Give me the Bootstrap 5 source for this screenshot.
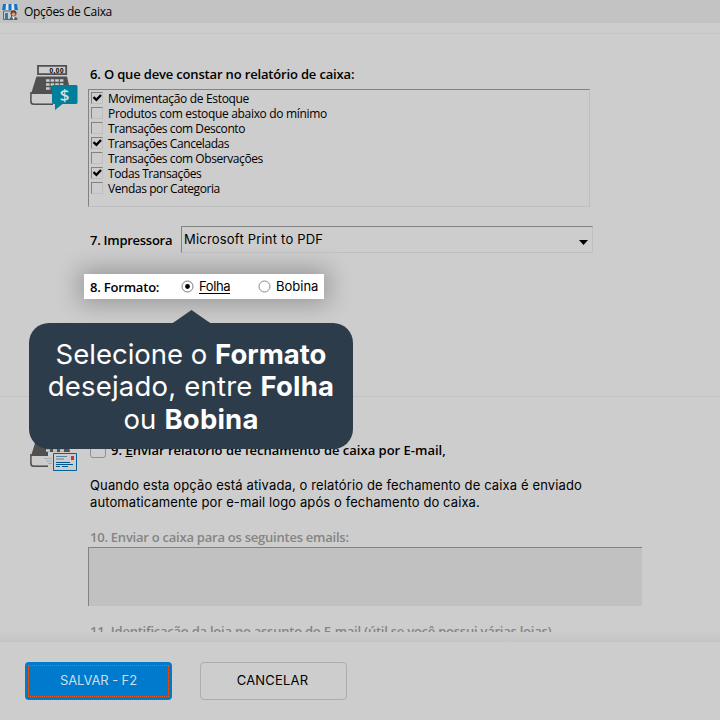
<!DOCTYPE html>
<html lang="pt-BR">
<head>
<meta charset="utf-8">
<meta name="viewport" content="width=device-width, initial-scale=1">
<title>Opções de Caixa</title>
<link href="https://cdn.jsdelivr.net/npm/bootstrap@5.3.0/dist/css/bootstrap.min.css" rel="stylesheet">
<style>
  body { width: 720px; height: 720px; overflow: hidden; background: #cdcdcd; color: #000; font-family: "Open Sans", "Noto Sans", sans-serif; font-size: 13px; }
  .titlebar { height: 23px; background: #c3c3c3; font-size: 12px; line-height: 23px; letter-spacing: -.31px; padding-left: 1px; gap: 5px; }
  .strip { height: 11px; border-bottom: 1px solid #c5c5c5; }
  .sect-a { height: 363px; border-bottom: 1px solid #c3c3c3; }
  .sect-b { height: 235px; overflow: hidden; }
  .icon-col { width: 88px; padding-left: 29px; }
  .sect-a .icon-col { padding-top: 24px; }
  .sect-b .icon-col { padding-top: 23px; }
  .ttl { font-weight: 600; font-size: 13px; line-height: 18px; padding-left: 2px; letter-spacing: -.165px; }
  .sect-a .first-ttl { margin: 31px 0 6px; }
  .sunken { border: 1px solid #bfbfbf; border-top-color: #828282; border-left-color: #828282; }
  .report-list { width: 502px; height: 118px; padding: 1px 0 0 2px; font-size: 12px; letter-spacing: -.325px; }
  .report-list li { height: 15px; line-height: 16px; gap: 5px; }
  .report-list .tight { letter-spacing: -.42px; }
  .tick { width: 12px; height: 12px; margin-top: 1px; }
  .tick svg { display: block; }
  .inter { font-family: Inter, sans-serif; font-size: 13px; }
  .printer-row { margin-top: 19px; height: 27px; }
  .printer-label { width: 93px; letter-spacing: -.27px; padding-top: 1px; }
  .printer { width: 412px; height: 27px; padding: 1px 4px 0 2px; letter-spacing: .2px; }
  .format-row { width: 240px; height: 25px; margin: 21px 0 0 -4px; padding-left: 4px; background: #fff; box-shadow: 0 0 24px 4px rgba(0,0,0,.28); }
  .format-label { width: 93px; letter-spacing: -.2px; padding-top: 1px; }
  .opt { gap: 5px; line-height: 16px; padding-bottom: 1px; }
  .opt-first { width: 77px; }
  .opt-first u { letter-spacing: -.4px; text-underline-offset: 2px; }
  .opt-title { height: 18px; gap: 3px; margin: 44px 0 0 2px; }
  .opt-title .ttl { letter-spacing: 0; }
  .box9 { width: 16px; height: 16px; margin-top: 1px; border: 1px solid #8f8f8f; border-radius: 3px; }
  .note { margin: 18px 0 0 2px; line-height: 17px; letter-spacing: .13px; }
  .note span { letter-spacing: .1px; }
  .dim { color: #848484; letter-spacing: -.24px; }
  .ttl-ten { margin: 17px 0 1px; }
  .emails { width: 554px; height: 59px; margin-bottom: 16px; background: #c1c1c1; border-top: 1px solid #828282; border-left: 1px solid #828282; }
  .shade { height: 10px; background: linear-gradient(#cccccc, #c4c4c4); }
  .foot { height: 78px; padding: 20px 25px; gap: 28px; }
  .foot .btn { width: 147px; height: 38px; border-radius: 4px; padding: 3px; font: 13px/1 Inter, sans-serif; }
  .foot .btn-save { background: #007acd; color: #d0dde6; border: 0; letter-spacing: -.1px; }
  .btn-save span { border: 1px dotted #ee5a14; padding-bottom: 1px; }
  .foot .btn-cancel { border: 1px solid #adadad; color: #000; letter-spacing: .2px; padding: 2px 5px 4px 3px; }
  .callout { left: 29px; top: 323px; width: 324px; height: 126px; border-radius: 20px; background: #2d3c4b; color: #fff; font: 400 27.5px/32.3px Inter, sans-serif; letter-spacing: .2px; padding-top: 15px; }
  .callout b { font-weight: 700; }
  .callout .first-line { letter-spacing: 0; }
  .callout svg { left: 142px; top: -13px; }
</style>
<script src="https://cdn.jsdelivr.net/npm/bootstrap@5.3.0/dist/js/bootstrap.bundle.min.js"></script>
</head>
<body class="position-relative d-flex flex-column">
<header class="titlebar d-flex align-items-center flex-shrink-0">
  <svg width="18" height="18" viewBox="0 0 18 18">
    <path d="M2.500 8h8v8.500h-8z" fill="#c9ced2" stroke="#56697a"/><path d="M4 10h3v6H4z" fill="#2f7fae"/>
    <path d="M2 1h14l1 6H1z" fill="#dfe4e9"/><path d="M2 1h3l-.5 6H1zM7.500 1h3v6h-3zM13 1h3l1 6h-3.500z" fill="#1373c9"/>
    <circle cx="12.500" cy="10.200" r="3" fill="#6b3f28"/><circle cx="12.500" cy="11.200" r="1.800" fill="#dba17c"/><path d="M8.500 17c0-3 2-3.200 4-3.200s4 .2 4 3.200z" fill="#5b6066"/><path d="M11 13.800h3L12.500 17z" fill="#eee"/>
  </svg>
  <span class="text-nowrap">Opções de Caixa</span>
</header>
<div class="strip flex-shrink-0"></div>

<section class="sect-a d-flex flex-shrink-0">
  <div class="icon-col flex-shrink-0">
    <svg class="d-block" width="52" height="56" viewBox="29 58 52 56">
      <path d="M38 65.900h28.200v8.200H38z" fill="#cdcdcd" stroke="#505050" stroke-width="1.800"/>
      <text x="49.500" y="72.500" font-family="Liberation Sans, sans-serif" font-weight="700" font-size="6.500" textLength="14">0,00</text>
      <path d="M36.500 76.500h30.500l4 17.500H31z" fill="#505050"/>
      <path d="M31 92v9.500q0 2.700 2.700 2.700H53" fill="none" stroke="#505050" stroke-width="1.700"/><path d="M31.800 94H60v9.300H34q-2.200 0-2.200-2.200z" fill="#cdcdcd"/>
      <path d="M46 80.500h18M46 84.500h18M46 88.500h5" stroke="#cdcdcd" stroke-width="2.600" stroke-dasharray="3.600 1"/>
      <path d="M53.500 85h22.600q1.400 0 1.400 1.400v16.200q0 1.400-1.400 1.400H62.500L55 110v-6h-1.500q-1.500 0-1.500-1.400V86.400q0-1.400 1.500-1.400z" fill="#007f9b"/>
      <text x="64.500" y="101" text-anchor="middle" font-family="Open Sans, sans-serif" font-weight="600" font-size="17" fill="#d4dfe2">$</text>
    </svg>
  </div>
  <div>
    <div class="ttl first-ttl text-nowrap">6. O que deve constar no relatório de caixa:</div>
    <ul class="report-list sunken list-unstyled mb-0 text-nowrap">
      <li class="d-flex"><i class="tick sunken"><svg width="10" height="10" viewBox="0 0 10 10"><path d="M1.500 4.200l2.900 2.700L9 2" fill="none" stroke="#000" stroke-width="2.300"/></svg></i>Movimentação de Estoque</li>
      <li class="d-flex"><i class="tick sunken"></i>Produtos com estoque abaixo do mínimo</li>
      <li class="d-flex tight"><i class="tick sunken"></i>Transações com Desconto</li>
      <li class="d-flex tight"><i class="tick sunken"><svg width="10" height="10" viewBox="0 0 10 10"><path d="M1.500 4.200l2.900 2.700L9 2" fill="none" stroke="#000" stroke-width="2.300"/></svg></i>Transações Canceladas</li>
      <li class="d-flex tight"><i class="tick sunken"></i>Transações com Observações</li>
      <li class="d-flex tight"><i class="tick sunken"><svg width="10" height="10" viewBox="0 0 10 10"><path d="M1.500 4.200l2.900 2.700L9 2" fill="none" stroke="#000" stroke-width="2.300"/></svg></i>Todas Transações</li>
      <li class="d-flex tight"><i class="tick sunken"></i>Vendas por Categoria</li>
    </ul>
    <div class="printer-row d-flex align-items-center">
      <div class="ttl printer-label text-nowrap">7. Impressora</div>
      <div class="printer sunken inter d-flex align-items-center justify-content-between">
        <span>Microsoft Print to PDF</span>
        <svg width="9" height="5" class="mt-1" viewBox="0 0 9 5"><path d="M0 0h9L4.500 5z"/></svg>
      </div>
    </div>
    <div class="format-row d-flex align-items-center">
      <div class="ttl format-label text-nowrap">8. Formato:</div>
      <div class="opt opt-first inter d-flex align-items-center"><svg width="13" height="13" viewBox="0 0 13 13"><circle cx="6.500" cy="6.500" r="5.500" fill="#fff" stroke="#777" /><circle cx="6.500" cy="6.500" r="2.400"/></svg><u>Folha</u></div>
      <div class="opt inter d-flex align-items-center"><svg width="13" height="13" viewBox="0 0 13 13"><circle cx="6.500" cy="6.500" r="5.500" fill="#fff" stroke="#888"/></svg><span>Bobina</span></div>
    </div>
  </div>
</section>

<section class="sect-b d-flex flex-shrink-0">
  <div class="icon-col flex-shrink-0">
    <svg class="d-block" width="52" height="56" viewBox="29 58 52 56">
      <path d="M38 65.900h28.200v8.200H38z" fill="#cdcdcd" stroke="#505050" stroke-width="1.800"/>
      <path d="M36.500 76.500h30.500l4 17.500H31z" fill="#505050"/>
      <path d="M31 92v9.500q0 2.700 2.700 2.700H48" fill="none" stroke="#505050" stroke-width="1.700"/>
      <path d="M31.800 94H72v9.300H34q-2.200 0-2.200-2.200zM48 90h24v6H48z" fill="#cdcdcd"/>
      <path d="M46 88.500h4M53 88.500h4M60 88.500h4" stroke="#cdcdcd" stroke-width="2.600"/>
      <path d="M44 96.500h8M46 99h6M48 101.500h4" stroke="#9fb0ba"/>
      <path d="M53.500 91.500h23v17h-23z" fill="#cdcdcd" stroke="#00639a"/>
      <path d="M56 94.500h11M56 97h8" stroke="#5b8199"/><path d="M56 100.500h14M56 102.500h17M56 104.500h4M62 104.500h6" stroke="#00578c"/>
      <path d="M71 94h3v4h-3z" fill="#c9382c"/>
    </svg>
  </div>
  <div>
    <div class="opt-title d-flex">
      <i class="box9"></i>
      <div class="ttl text-nowrap">9. <u>E</u>nviar relatório de fechamento de caixa por E-mail,</div>
    </div>
    <p class="note inter mb-0 text-nowrap">Quando esta opção está ativada, o relatório de fechamento de caixa é enviado<br><span>automaticamente por e-mail logo após o fechamento do caixa.</span></p>
    <div class="ttl ttl-ten dim text-nowrap">10. Enviar o caixa para os seguintes emails:</div>
    <div class="emails"></div>
    <div class="ttl dim text-nowrap">11. Identificação da loja no assunto do E-mail (útil se você possui várias lojas)</div>
  </div>
</section>
<div class="shade flex-shrink-0"></div>
<footer class="foot d-flex flex-shrink-0">
  <button class="btn btn-save d-flex" type="button"><span class="w-100 h-100 d-flex align-items-center justify-content-center">SALVAR - F2</span></button>
  <button class="btn btn-cancel" type="button">CANCELAR</button>
</footer>

<div class="callout position-absolute text-center">
  <svg class="position-absolute" width="41" height="14" viewBox="0 0 41 14"><path d="M0 13.500Q2 13 4 11.500L20.500 0 37 11.500q2 1.500 4 2z" fill="#2d3c4b"/></svg>
  <span class="first-line">Selecione o <b>Formato</b></span><br>desejado, entre <b>Folha</b><br>ou <b>Bobina</b>
</div>
</body>
</html>
